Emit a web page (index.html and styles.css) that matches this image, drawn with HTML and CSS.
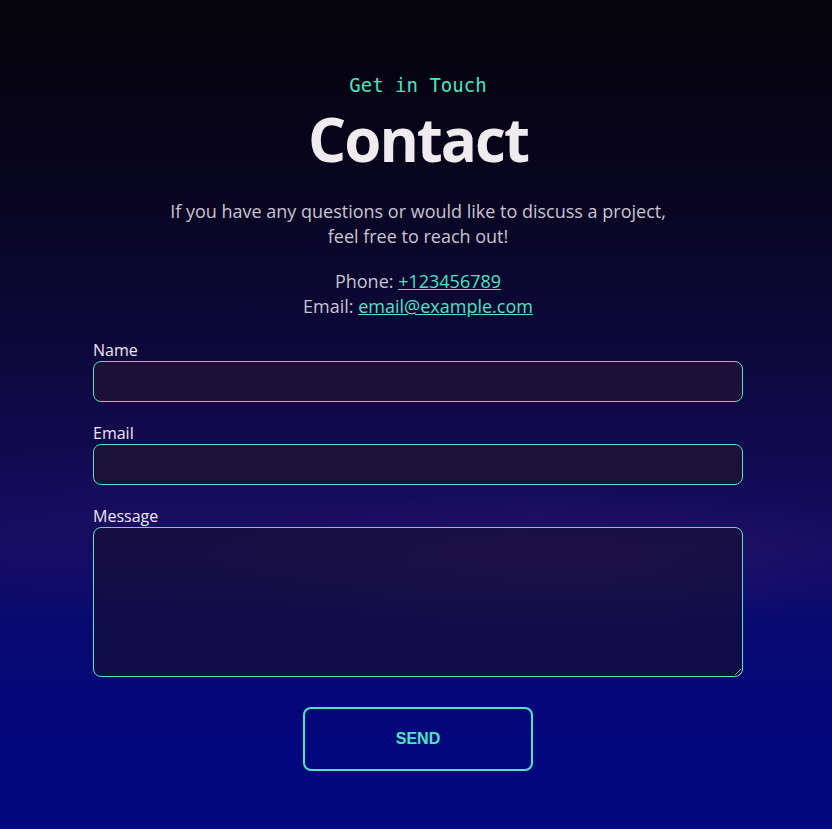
FILE: index.html
```html
<!DOCTYPE html>
<html lang="en">
<head>
<meta charset="utf-8">
<title>Contact</title>
<link rel="stylesheet" href="styles.css">
</head>
<body>
<section class="contact">
  <p class="eyebrow">Get in Touch</p>
  <h1 class="title">Contact</h1>
  <p class="intro">If you have any questions or would like to discuss a project, feel free to reach out!</p>
  <div class="details">
    <div>Phone: <a href="#">+123456789</a></div>
    <div>Email: <a href="#">email@example.com</a></div>
  </div>
  <form class="form">
    <label class="field">
      <span class="label">Name</span>
      <input class="input" type="text">
    </label>
    <label class="field">
      <span class="label">Email</span>
      <input class="input" type="email">
    </label>
    <label class="field">
      <span class="label">Message</span>
      <textarea class="input textarea"></textarea>
    </label>
    <button class="send" type="button">SEND</button>
  </form>
</section>
</body>
</html>
```
FILE: styles.css
```css
html, body {
  margin: 0;
  padding: 0;
}
body {
  min-height: 829px;
  font-family: "Open Sans", sans-serif;
  color: #e9e6ee;
  background:
    radial-gradient(ellipse 360px 70px at 560px 560px, rgba(48, 24, 110, 0.55), rgba(48, 24, 110, 0) 100%),
    radial-gradient(ellipse 600px 90px at 300px 530px, rgba(30, 14, 100, 0.5), rgba(30, 14, 100, 0) 100%),
    linear-gradient(180deg, #040309 0%, #08051f 22%, #0d0738 40%, #130a55 58%, #150c62 66%, #0a0a70 74%, #03077a 86%, #02087e 100%);
}
.contact {
  width: 650px;
  margin: 0 auto;
  padding: 74px 0 57px 4px;
  display: flex;
  flex-direction: column;
  align-items: center;
  text-align: center;
}
.eyebrow {
  margin: 0;
  font-family: "DejaVu Sans Mono", monospace;
  font-size: 19px;
  line-height: 22px;
  color: #4fe3c1;
}
.title {
  margin: 4px 0 0;
  font-family: "Open Sans", sans-serif;
  font-weight: 700;
  font-size: 60px;
  letter-spacing: -2px;
  line-height: 78px;
  color: #efebee;
}
.intro {
  margin: 21px 0 0;
  max-width: 515px;
  font-size: 18px;
  line-height: 25px;
  color: #c9c4d2;
}
.details {
  margin-top: 20px;
  font-size: 18px;
  line-height: 25px;
  color: #c9c4d2;
}
.details a {
  color: #4fe3c1;
}
.form {
  width: 650px;
  margin-top: 20px;
  display: flex;
  flex-direction: column;
  align-items: center;
  text-align: left;
}
.field {
  width: 100%;
  display: flex;
  flex-direction: column;
  margin-bottom: 20px;
}
.label {
  font-size: 16px;
  line-height: 22px;
  color: #ece8f2;
}
.input {
  box-sizing: border-box;
  width: 100%;
  height: 41px;
  margin: 0;
  border: 1px solid #4fe3c1;
  border-radius: 8px;
  background: rgba(30, 18, 54, 0.88);
  color: #fff;
  font: inherit;
  outline: none;
}
.textarea {
  height: 150px;
  resize: vertical;
  background: rgba(22, 16, 50, 0.62);
}
.send {
  margin-top: 10px;
  width: 230px;
  height: 64px;
  border: 2px solid #4fe3c1;
  border-radius: 8px;
  background: transparent;
  color: #4fe3c1;
  font-family: "Liberation Sans", Arial, sans-serif;
  font-weight: 700;
  font-size: 16px;
  cursor: pointer;
}
```
